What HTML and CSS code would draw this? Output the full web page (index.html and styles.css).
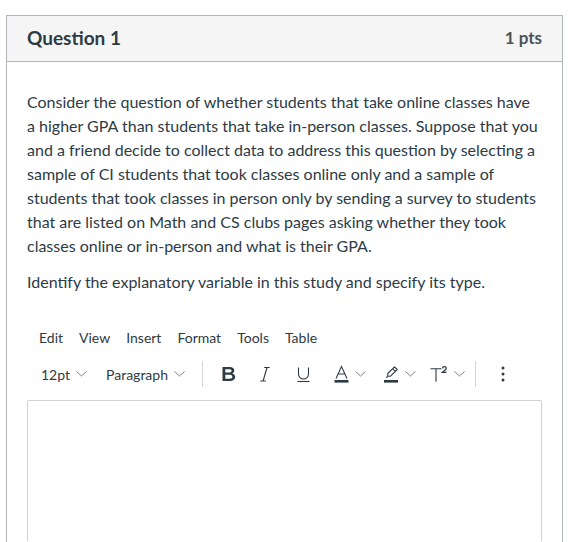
FILE: index.html
```html
<!DOCTYPE html>
<html>
<head>
<meta charset="utf-8">
<link rel="stylesheet" href="styles.css">
</head>
<body>
<div class="question">
  <div class="q-header">
    <span class="q-title">Question 1</span>
    <span class="q-pts">1 pts</span>
  </div>
  <div class="q-body">
    <p>Consider the question of whether students that take online classes have a higher GPA than students that take in-person classes. Suppose that you and a friend decide to collect data to address this question by selecting a sample of CI students that took classes online only and a sample of students that took classes in person only by sending a survey to students that are listed on Math and CS clubs pages asking whether they took classes online or in-person and what is their GPA.</p>
    <p>Identify the explanatory variable in this study and specify its type.</p>
    <div class="rce">
      <div class="menubar">
        <span>Edit</span><span>View</span><span>Insert</span><span>Format</span><span>Tools</span><span>Table</span>
      </div>
      <div class="toolbar">
        <div class="tb-group">
          <span class="tb-select size">12pt <svg class="chev" width="11" height="6" viewBox="0 0 11 6"><polyline points="0.5,0.5 5.5,5 10.5,0.5"/></svg></span>
          <span class="tb-select para">Paragraph <svg class="chev" width="11" height="6" viewBox="0 0 11 6"><polyline points="0.5,0.5 5.5,5 10.5,0.5"/></svg></span>
        </div>
        <div class="tb-sep first"></div>
        <div class="tb-group">
          <span class="icon b"><svg width="16" height="18" viewBox="0 0 16 18"><path fill-rule="evenodd" d="M1.5 2H8.6C11.6 2 13.3 3.3 13.3 5.5C13.3 6.9 12.5 8 11.2 8.4C12.9 8.8 14.2 10 14.2 11.8C14.2 14.4 12.2 16 9 16H1.5Z M4.3 7.5H8.2C9.8 7.5 10.6 6.9 10.6 5.8C10.6 4.7 9.8 4.2 8.2 4.2H4.3Z M4.3 13.8H8.7C10.5 13.8 11.4 13 11.4 11.8C11.4 10.6 10.5 9.8 8.7 9.8H4.3Z" fill="#2d3b45"/></svg></span>
          <span class="icon i"><svg width="12" height="18" viewBox="0 0 12 18"><path d="M5.2 2.5h5.5M1.3 16h5.5M8 2.5l-3.9 13.5" fill="none" stroke="#2d3b45" stroke-width="1.1"/></svg></span>
          <span class="icon u"><svg width="15" height="18" viewBox="0 0 15 18"><path d="M2.5 2.5v6.5a5 5 0 0 0 10 0v-6.5" fill="none" stroke="#2d3b45" stroke-width="1.1"/><path d="M1.5 16.5h12" stroke="#2d3b45" stroke-width="1.1"/></svg></span>
          <span class="icon a"><svg width="15" height="18" viewBox="0 0 15 18"><path d="M2 13.5l5.5-12 5.5 12M4 9h7" fill="none" stroke="#2d3b45" stroke-width="1.1"/><rect x="0.5" y="15" width="14" height="2.6" fill="#2d3b45"/></svg><svg class="chev" width="11" height="6" viewBox="0 0 11 6"><polyline points="0.5,0.5 5.5,5 10.5,0.5"/></svg></span>
          <span class="icon hl"><svg width="16" height="18" viewBox="0 0 16 18"><path d="M11.5 1.8l2.7 2.7-6.7 6.7H4.8v-2.7z M9.6 3.7l2.7 2.7" fill="none" stroke="#2d3b45" stroke-width="1.1" stroke-linejoin="round"/><path d="M4.8 11.2l-1.6 1.6" stroke="#2d3b45" stroke-width="1.1"/><rect x="1" y="15" width="14" height="2.6" fill="#2d3b45"/></svg><svg class="chev" width="11" height="6" viewBox="0 0 11 6"><polyline points="0.5,0.5 5.5,5 10.5,0.5"/></svg></span>
          <span class="icon sup"><svg width="18" height="18" viewBox="0 0 18 18"><path d="M0.5 3.8h11M6 3.8v13" fill="none" stroke="#2d3b45" stroke-width="1.1"/><path d="M12.4 3.3c.2-1.1.9-1.7 2-1.7 1.1 0 1.8.6 1.8 1.6 0 .8-.4 1.3-1.3 2l-2.6 2.1h4.2" fill="none" stroke="#2d3b45" stroke-width="1.3"/></svg><svg class="chev" width="11" height="6" viewBox="0 0 11 6"><polyline points="0.5,0.5 5.5,5 10.5,0.5"/></svg></span>
        </div>
        <div class="tb-sep second"></div>
        <div class="tb-group">
          <span class="icon more"><svg width="4" height="16" viewBox="0 0 4 16"><circle cx="2" cy="2" r="1.5"/><circle cx="2" cy="8" r="1.5"/><circle cx="2" cy="14" r="1.5"/></svg></span>
        </div>
      </div>
      <div class="editor-area"></div>
    </div>
  </div>
</div>
</body>
</html>
```

FILE: styles.css
```css
html, body {
  margin: 0;
  padding: 0;
  background: #ffffff;
}
body {
  padding: 15px 0 0 6px;
  font-family: Lato, "Open Sans", sans-serif;
  color: #2d3b45;
}
.question {
  width: 557px;
  box-sizing: border-box;
  border: 1px solid #b3b6b9;
  border-bottom: none;
  height: 527px;
  overflow: hidden;
}
.q-header {
  height: 46px;
  box-sizing: border-box;
  background: #f5f5f5;
  border-bottom: 1px solid #b3b6b9;
  display: flex;
  align-items: center;
  justify-content: space-between;
  padding: 0 20px 2px 20px;
}
.q-title {
  font-size: 19px;
  font-weight: bold;
  color: #2d3b45;
}
.q-pts {
  font-size: 17px;
  font-weight: bold;
  color: #4a5358;
}
.q-body {
  padding: 28px 20px 0 20px;
}
.q-body p {
  margin: 0 0 12px 0;
  font-size: 16px;
  line-height: 24px;
}
.rce {
  margin-top: 29px;
}
.menubar {
  height: 28px;
  display: flex;
  align-items: center;
  padding-left: 12px;
  gap: 16px;
  font-size: 14px;
  color: #2d3b45;
}
.toolbar {
  margin-top: 6px;
  height: 34px;
  display: flex;
  align-items: center;
}
.tb-group {
  display: flex;
  align-items: center;
}
.tb-select {
  display: flex;
  align-items: center;
  font-size: 14px;
  gap: 6px;
  color: #2d3b45;
}
.size {
  margin-left: 14px;
}
.para {
  margin-left: 19px;
}
.chev {
  fill: none;
  stroke: #7b8085;
  stroke-width: 1;
}
.tb-sep {
  width: 1px;
  height: 26px;
  background: #d4d6d8;
}
.tb-sep.first {
  margin: 0 14px 0 17px;
}
.tb-sep.second {
  margin: 0 14px 0 10px;
}
.icon {
  display: flex;
  align-items: center;
  gap: 6px;
}
.icon.b { margin-left: 4px; }
.icon.i { margin-left: 22px; }
.icon.u { margin-left: 25px; }
.icon.a { margin-left: 23px; }
.icon.hl { margin-left: 17px; }
.icon.sup { margin-left: 14px; }
.icon.more { margin-left: 11px; fill: #2d3b45; }
.editor-area {
  margin-top: 9px;
  height: 140px;
  border: 1px solid #cfd1d3;
  border-bottom: none;
  border-radius: 2px 2px 0 0;
}
```
